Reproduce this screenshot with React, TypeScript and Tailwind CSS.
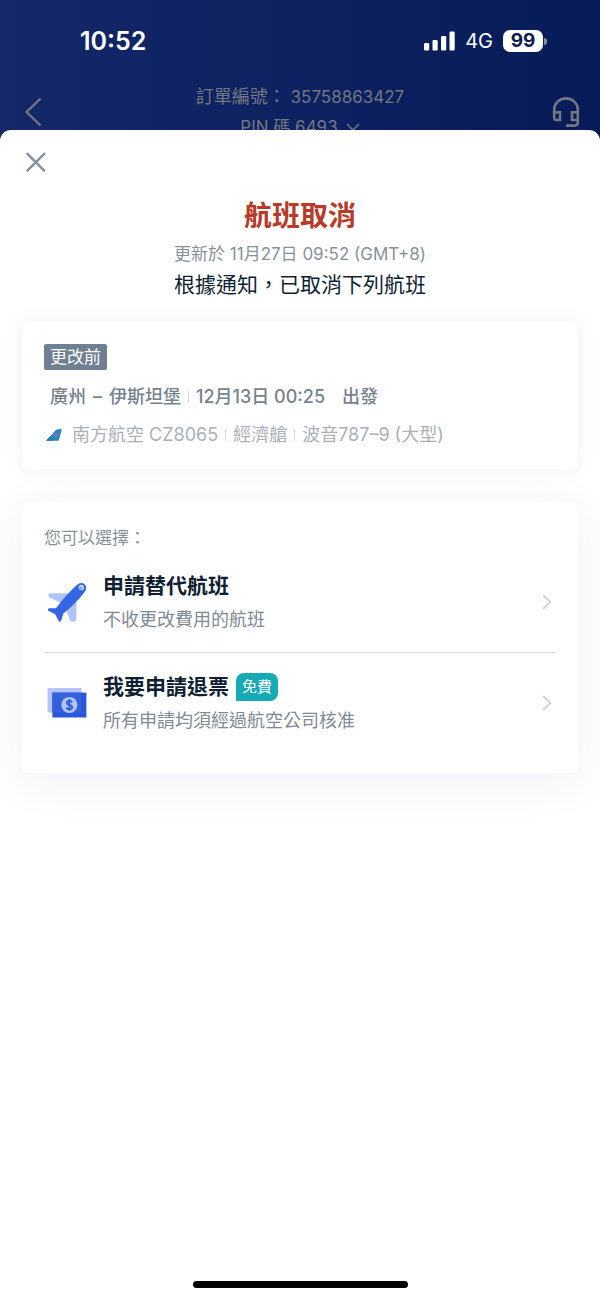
import React from 'react';

const BackIcon = () => (
  <svg width="20" height="32" viewBox="0 0 20 32" fill="none" stroke="currentColor" strokeWidth="2.4">
    <path d="M16.5 2.5 L2.6 16 L16.5 29.5" />
  </svg>
);

const HeadsetIcon = () => (
  <svg width="28" height="30" viewBox="0 0 28 30" fill="none" stroke="currentColor" strokeWidth="2.6">
    <path d="M2.2 15.5 V12.6 A11.8 11.2 0 0 1 25.8 12.6 V25.6 Q25.8 28.6 22.8 28.6 H14" />
    <path d="M2.2 15.2 H8 V23 H4.6 Q2.2 23 2.2 20.8 Z" />
    <path d="M25.8 15.2 H20 V23 H25.8" />
  </svg>
);

const SignalIcon = () => (
  <svg width="31" height="20" viewBox="0 0 31 20" fill="currentColor">
    <rect x="0" y="12" width="5.2" height="7.5" rx="1.3" />
    <rect x="8.5" y="9" width="5.2" height="10.5" rx="1.3" />
    <rect x="17" y="5" width="5.2" height="14.5" rx="1.3" />
    <rect x="25.5" y="0.5" width="5.2" height="19" rx="1.3" />
  </svg>
);

const CloseIcon = () => (
  <svg width="24" height="24" viewBox="0 0 24 24" fill="none" stroke="currentColor" strokeWidth="2.4" strokeLinecap="round">
    <path d="M3.4 3.8 L20.2 20.6 M20.2 3.8 L3.4 20.6" />
  </svg>
);

const ChevronRight = () => (
  <svg width="10" height="16" viewBox="0 0 10 16" fill="none" stroke="currentColor" strokeWidth="1.6">
    <path d="M1.2 1.2 L8.4 8 L1.2 14.8" />
  </svg>
);

const AirlineLogo = () => (
  <svg width="16" height="12" viewBox="0 0 16 12">
    <path d="M0 11.8 L9.4 1.6 Q10.8 0.2 12.6 0.2 H16 L12.6 11.8 Z" fill="#2189bd" />
    <path d="M0 11.8 L4.6 7.2 L7 11.8 Z" fill="#2f78a8" />
    <circle cx="9.6" cy="5.8" r="2" fill="#7d7aa8" />
    <circle cx="9.7" cy="5.7" r="1" fill="#cf4a64" />
  </svg>
);

const PlaneIcon = () => (
  <svg width="40" height="40" viewBox="0 0 40 40">
    <path d="M2.8 11.2 H20.6 L24 14 L14 21 L2.6 15.6 Q1 14.6 1.2 12.8 Q1.4 11.2 2.8 11.2 Z" fill="#b0c4fb" />
    <path d="M29.6 15 L29.4 36.6 Q29.2 39.6 26.8 39.8 H25 Q23.4 39.8 22.8 38 L19 27 Z" fill="#b0c4fb" />
    <path
      d="M29.8 3 Q33.8 -0.4 37.4 2 Q40.8 5 38 9.4 Q30 20.4 16.4 31.4 L14.2 38.6 Q13.2 40.4 11.8 39.2 L8 32 L1.6 29 Q0.2 27.4 1.8 26.2 L9 26.2 Q18.8 13 29.8 3 Z"
      fill="#3565e5"
    />
    <path d="M32 3.8 Q34.6 2 36.6 3.6 Q38 6 36 8.2 Q33.8 8.8 32.4 7.2 Q31 5.4 32 3.8 Z" fill="#c3d2ff" />
    <circle cx="34" cy="6" r="1.2" fill="#7d9ff5" />
  </svg>
);

const RefundIcon = () => (
  <svg width="40" height="30" viewBox="0 0 40 30">
    <rect x="0.6" y="0" width="34" height="24.5" fill="#b5c5fb" />
    <rect x="5.4" y="4.6" width="34" height="24.9" fill="#2b58da" />
    <path d="M5.4 4.6 H34.6 V24.5 H5.4 Z" fill="#3460de" />
    <circle cx="22.4" cy="17" r="8" fill="#b5c5fb" />
    <path
      d="M25 14.6 Q24.6 12.8 22.4 12.8 Q19.9 12.8 19.9 14.8 Q19.9 16.4 22.4 16.9 Q25.2 17.5 25.2 19.3 Q25.2 21.3 22.4 21.3 Q19.8 21.3 19.5 19.3 M22.4 11 V23"
      fill="none"
      stroke="#2b58da"
      strokeWidth="1.7"
    />
  </svg>
);

const Divider = () => <span className="h-3 w-px bg-[#d5dade]"></span>;

const options = [
  { title: '申請替代航班', note: '不收更改費用的航班', badge: '', icon: <PlaneIcon /> },
  { title: '我要申請退票', note: '所有申請均須經過航空公司核准', badge: '免費', icon: <RefundIcon /> },
];

const App: React.FC = () => {
  return (
    <div
      lang="zh-Hant-TW"
      className="flex min-h-screen flex-col bg-gradient-to-r from-[#14286a] to-[#071b58] font-['Inter','Noto_Sans_CJK_TC',sans-serif]"
    >
      {/* Status bar */}
      <div className="flex h-[82px] items-center justify-between pr-[53px] pl-20 text-white">
        <span className="pt-0.5 text-[25px] font-semibold">10:52</span>
        <div className="flex items-center">
          <SignalIcon />
          <span className="ml-2.5 text-xl">4G</span>
          <span className="ml-2.5 flex h-[22px] w-10 items-center justify-center rounded-[7px] bg-white text-[19px] font-bold text-[#0b1c50]">
            99
          </span>
          <span className="ml-px h-[7px] w-[3px] rounded-r-full bg-white/50"></span>
        </div>
      </div>

      {/* Order header, dimmed behind the sheet */}
      <header className="flex items-center justify-between pr-5 pl-6 text-[#737580]">
        <button type="button" aria-label="返回">
          <BackIcon />
        </button>
        <div className="pl-1 text-center text-[17px] leading-[30px]">
          <p>
            <span className="text-lg leading-[30px]">訂單編號：</span> 35758863427
          </p>
          <button type="button" className="inline-flex items-center gap-2">
            PIN 碼 6493
            <svg width="14" height="8" viewBox="0 0 14 8" fill="none" stroke="currentColor" strokeWidth="1.5">
              <path d="M1 1 L7 7 L13 1" />
            </svg>
          </button>
        </div>
        <button type="button" aria-label="客服">
          <HeadsetIcon />
        </button>
      </header>

      {/* Sheet */}
      <main className="relative -mt-3 flex grow flex-col rounded-t-[11px] bg-white px-[22px] pt-5 pb-3">
        <button type="button" aria-label="關閉" className="ml-0.5 self-start text-[#8390a0]">
          <CloseIcon />
        </button>

        <div className="mt-[22px] text-center">
          <h1 className="text-[28px] leading-10 font-bold text-[#b93a28]">航班取消</h1>
          <p className="mt-1 text-[17px] leading-7 text-[#87919b]">更新於 11月27日 09:52 (GMT+8)</p>
          <p className="text-[21px] leading-[34px] text-[#0f1f33]">根據通知，已取消下列航班</p>
        </div>

        <section className="mt-[19px] rounded-md bg-white px-[22px] pt-[23px] pb-5 shadow-[0_0_22px_rgba(15,41,77,0.06)]">
          <span className="block w-fit rounded-xs bg-[#717f92] px-1.5 text-[17px] leading-[26px] text-white">更改前</span>
          <p className="mt-[13px] flex items-center gap-[7px] pl-1.5 text-lg leading-7 font-medium whitespace-nowrap text-[#76828f]">
            <span>廣州</span>
            <span>–</span>
            <span>伊斯坦堡</span>
            <Divider />
            <span>12月13日 00:25</span>
            <span className="ml-2.5">出發</span>
          </p>
          <p className="mt-2.5 flex items-center gap-[7px] pl-0.5 text-lg leading-7 whitespace-nowrap text-[#a9b0b8]">
            <AirlineLogo />
            <span className="ml-[3px]">南方航空 CZ8065</span>
            <Divider />
            <span>經濟艙</span>
            <Divider />
            <span>波音787–9 (大型)</span>
          </p>
        </section>

        <section className="mt-[33px] rounded-md bg-white px-[22px] pt-[22px] pb-5 shadow-[0_8px_48px_rgba(15,41,50,0.07)]">
          <h2 className="text-[17px] leading-7 text-[#87919b]">您可以選擇：</h2>
          {options.map((option, i) => (
            <button
              key={option.title}
              type="button"
              className={`flex w-full items-center py-[15px] pr-1 pl-[3px] text-left ${i > 0 ? 'border-t border-[#d9dcdf]' : ''}`}
            >
              {option.icon}
              <span className="ml-4 grow pt-0.5">
                <span className="flex items-center gap-[7px] text-[21px] leading-[34px] font-bold text-[#0f1f33]">
                  {option.title}
                  {option.badge && (
                    <span className="rounded-lg rounded-bl-none bg-[#16aab4] px-1.5 text-[15px] leading-7 font-normal text-white">
                      {option.badge}
                    </span>
                  )}
                </span>
                <span className="block text-lg leading-[34px] text-[#7f8a95]">{option.note}</span>
              </span>
              <span className="text-[#c9cdd1]">
                <ChevronRight />
              </span>
            </button>
          ))}
        </section>

        {/* Home indicator */}
        <div className="mx-auto mt-auto h-[7px] w-[215px] rounded-full bg-black"></div>
      </main>
    </div>
  );
};

export default App;
